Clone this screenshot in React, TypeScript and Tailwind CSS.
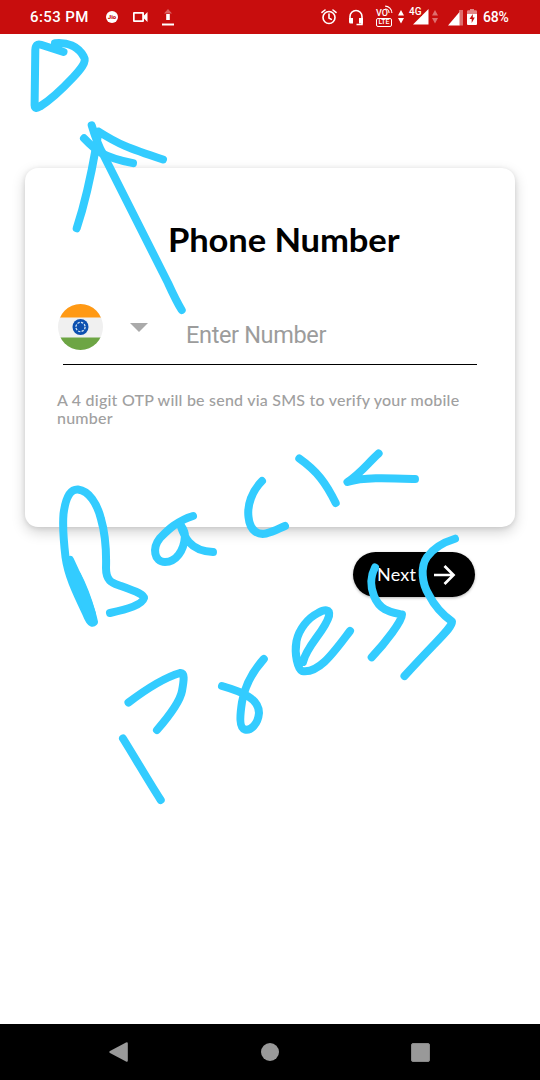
import React from "react";

const strokes = [
  "M63.5 52 L41 44.8 Q35.5 43 35.3 50 L34.6 105 Q34.8 110 40 106.500 C52 99 65 86 73 77.500 C80 70 87 62 84 57 C78 46 67 42 55 43.200",
  "M91.700 125.300 C94 133 98 145 103 154 L168 283 C173 294 178 304 181.700 310",
  "M76.700 228.300 C85 203 91 176 96 147 L98.500 131.500 C118 144 128 148 163 159.500",
  "M84 138.300 C96 151 103 157 133 163.200",
  "M70 560 C78 577 90 603 94 622 C91 625 88 618 86 613 C75 590 68 575 65.500 557 C63.500 540 62.500 526 63.500 514 C65.500 498 70 489 78 489.500 C89 491 97 503 101 519 C106 536 106.500 550 106 568 C106 582 113 583 121 586 C138 592 144 595 144 598 C142 605 128 609 110 613",
  "M72 568 C76 585 81 600 90 613 M77 575 C84 588 88 600 92 614",
  "M193 516 C176 521 166 532 160 538 C152 548 154 562 165 562 C176 562 184 551 185 536 C185 530 181 526 180 524 C184 536 189 551 213 552",
  "M262 481 C252 491 247 505 248.500 517 C250 532 259 535 266 533.500 C273 532 278 529 285 526",
  "M299.300 458.500 C317 471 326 483 335.700 503",
  "M378.600 453.500 C368 463 361 473 347.500 482 C363 477 387 478 415 479",
  "M375 567.500 C369 579 371 588 374 596 C380 611 391 612 402 614.500 C402 621 386 642 371.700 657.300",
  "M455 538.700 C441 543 432 550 427 557 C420 567 422 584 429 595 C435 607 443 615 452 621.500 C452 628 441 636 404.500 676",
  "M303 662 C307 645 325 631 329 616 C330 609 325 609 318 613 C308 618 299 629 296.500 641 C294 655 298 669 302 671 C319 674 334 652 350 631",
  "M222 686 C243 692 259 699 259 713 C258 724 251 731 245 729.500 C239 728 240 715 242 702 C245 685 253 671 263.800 659",
  "M128.500 702.500 C145 690 163 678 180 673 C185 672 184 680 182 691 C180 702 170 715 157 730",
  "M123 738.500 C137 761 149 782 160.700 800",
];

function DataArrows({ faded = false }: { faded?: boolean }) {
  return (
    <svg className={faded ? "h-4 w-1.5 opacity-40" : "h-4 w-1.5"} viewBox="0 0 6 16" fill="white">
      <path d="M0 6.500 3 1l3 5.500ZM0 9h6l-3 5.500Z" />
    </svg>
  );
}

function StatusBar() {
  return (
    <header className="flex h-[34px] items-center bg-[#c80d0d] pl-[30px] font-['Roboto',sans-serif] text-white">
      <span className="w-[76px] text-[15px] leading-none font-medium tracking-[0.4px] whitespace-nowrap">6:53 PM</span>
      <span className="flex size-3 items-center justify-center rounded-full bg-white text-[6px] leading-none font-black text-[#c80d0d]">Jio</span>
      <svg className="ml-[15px] h-3 w-[15px]" viewBox="0 0 15 12" fill="white">
        <path fillRule="evenodd" d="M1 1h9q1 0 1 1v2.500L14.500 1v10L11 7.500V10q0 1-1 1H1q-1 0-1-1V2q0-1 1-1Zm.7 1.800v6.400h7.500V2.800Z" />
      </svg>
      <svg className="ml-3.5 h-[18px] w-3" viewBox="0 0 12 18" fill="white">
        <path opacity=".35" d="M2 5.500 6 1l4 4.500Z" />
        <path d="M4.200 6h3.600v6H4.200ZM0 15.500h12v2H0Z" />
      </svg>
      <svg className="ml-[147px] size-4" viewBox="0 0 16 16" fill="none" stroke="white" strokeWidth="1.600" strokeLinecap="round">
        <circle cx="8" cy="8.500" r="6" />
        <path d="M8 5v4l2.300 1.400M1 3.400 4 1M15 3.400 12 1" />
      </svg>
      <svg className="ml-[11px] h-[17px] w-4" viewBox="0 0 16 17" fill="none" stroke="white" strokeWidth="1.600">
        <path d="M2 12V7.500a6 6 0 0 1 12 0V15.500H8.500" />
        <path fill="white" stroke="none" d="M1 9h4v5.500H2.500Q1 14.500 1 13ZM11 9h4v5.500h-4Z" />
      </svg>
      <span className="relative ml-[11px] flex h-5 w-[18px] flex-col items-center justify-end">
        <svg className="absolute -top-0.5 right-0 size-[9px]" viewBox="0 0 8 8" fill="none" stroke="white" strokeWidth="1">
          <path d="M1 1a6 6 0 0 1 6 6M1 3.500A3.500 3.500 0 0 1 4.500 7" />
        </svg>
        <span className="mr-1 text-[9px] leading-[9px] font-medium">VO</span>
        <span className="flex h-[9px] w-4 items-center justify-center rounded-[2px] border border-white text-[7px] leading-none font-medium">LTE</span>
      </span>
      <span className="ml-[5px] flex"><DataArrows /></span>
      <span className="relative ml-[5px] flex h-[18px] w-5 justify-end">
        <svg className="h-[17px] w-4" viewBox="0 0 16 17" fill="white"><path d="M15.500 1v15.500H0Z" /></svg>
        <span className="absolute -top-px left-0 bg-[#c80d0d] text-[10px] leading-[9px] font-medium">4G</span>
      </span>
      <span className="ml-[3px] flex"><DataArrows faded /></span>
      <svg className="ml-2.5 h-[17px] w-4" viewBox="0 0 16 17" fill="white">
        <path opacity=".4" d="M11 1h4v15.500h-4Z" />
        <path d="M11.500 3v13.500H0Z" />
      </svg>
      <svg className="ml-[3px] h-4 w-2.5" viewBox="0 0 10 16" fill="white">
        <path fillRule="evenodd" d="M3 0h4v1.500h2q1 0 1 1V15q0 1-1 1H1q-1 0-1-1V2.500q0-1 1-1h2Zm2.800 5L2.500 10h2.200v4L7.800 8.500H5.800Z" />
        <path opacity=".5" fill="#c80d0d" d="M3 0h4v1.500h3V5H0V1.500h3Z" />
      </svg>
      <span className="ml-1.5 text-[14px] leading-none font-medium tracking-[-0.2px]">68%</span>
    </header>
  );
}

function PhoneCard() {
  return (
    <section className="mx-[25px] mt-[134px] h-[359px] rounded-[13px] bg-white px-8 pt-[52px] shadow-[0_5px_14px_rgba(0,0,0,0.18),0_1px_5px_rgba(0,0,0,0.1)]">
      <h1 className="ml-[111px] w-fit origin-left scale-x-[1.08] text-[32px] leading-10 font-bold tracking-[-0.1px] whitespace-nowrap text-black">Phone Number</h1>
      <div className="mt-[43px] flex h-[49px] items-start">
        <svg className="mt-px ml-px h-[46px] w-[45px]" viewBox="0 0 45 46">
          <clipPath id="flag-disc"><ellipse cx="22.500" cy="23" rx="22.500" ry="23" /></clipPath>
          <g clipPath="url(#flag-disc)">
            <path fill="#f0f0f0" d="M0 0h45v46H0Z" />
            <path fill="#ff9914" d="M0 0h45v13.500H0Z" />
            <path fill="#6da544" d="M0 33.500h45v13H0Z" />
          </g>
          <circle cx="22.500" cy="23" r="8" fill="#0c50b0" />
          <circle cx="22.500" cy="23" r="4.600" fill="none" stroke="#d5e6f5" strokeWidth="1.300" strokeDasharray="2.300 1.300" />
          <circle cx="22.500" cy="23" r="1.800" fill="#164fa5" />
        </svg>
        <svg className="mt-5 ml-[27px] h-[9px] w-[18px]" viewBox="0 0 18 9"><path fill="#aaa" d="M0 0h18L9 9Z" /></svg>
        <label className="mt-[17px] ml-[38px] font-['Roboto',sans-serif] text-[23.500px] leading-[30px] tracking-[-0.35px] whitespace-nowrap text-[#9c9c9c]">Enter Number</label>
      </div>
      <div className="mt-3 ml-1.5 h-px w-[414px] bg-black" />
      <p className="mt-[26px] text-[16px] leading-[18px] font-medium tracking-[0.22px] whitespace-nowrap text-[#a0a0a0]">
        A 4 digit OTP will be send via SMS to verify your mobile<br />number
      </p>
    </section>
  );
}

export default function App() {
  return (
    <div className="relative flex h-[1080px] w-[540px] flex-col overflow-hidden bg-white font-['Lato',sans-serif]">
      <StatusBar />
      <PhoneCard />
      <button className="mt-[25px] ml-[353px] flex h-[45px] w-[122px] items-center rounded-full bg-black pl-6 text-white shadow-[0_1px_3px_rgba(0,0,0,0.3)]">
        <span className="w-[57px] text-left text-[18px] tracking-[0.2px]">Next</span>
        <svg className="h-5 w-[22px]" viewBox="0 0 22 20" fill="none" stroke="white" strokeWidth="2.700"><path d="M0 10h19.500M10.500 1l9 9-9 9" /></svg>
      </button>
      <nav className="mt-auto flex h-14 shrink-0 items-center bg-black pl-[109px]">
        <svg className="h-5 w-[19px]" viewBox="0 0 19 20"><path fill="#999" d="M1 9 17 .4q1.800-.8 1.800 1v17.200q0 1.800-1.800 1L1 11q-1.500-1 0-2Z" /></svg>
        <span className="ml-[132.500px] size-[18px] rounded-full bg-[#999]" />
        <span className="ml-[132px] size-[19px] rounded-[2px] border border-[#888] bg-[#999]" />
      </nav>
      <svg className="pointer-events-none absolute inset-0 h-[1080px] w-[540px]" viewBox="0 0 540 1080" fill="none" stroke="#33ccff" strokeWidth="8" strokeLinecap="round" strokeLinejoin="round">
        {strokes.map((d) => <path key={d} d={d} />)}
      </svg>
    </div>
  );
}
